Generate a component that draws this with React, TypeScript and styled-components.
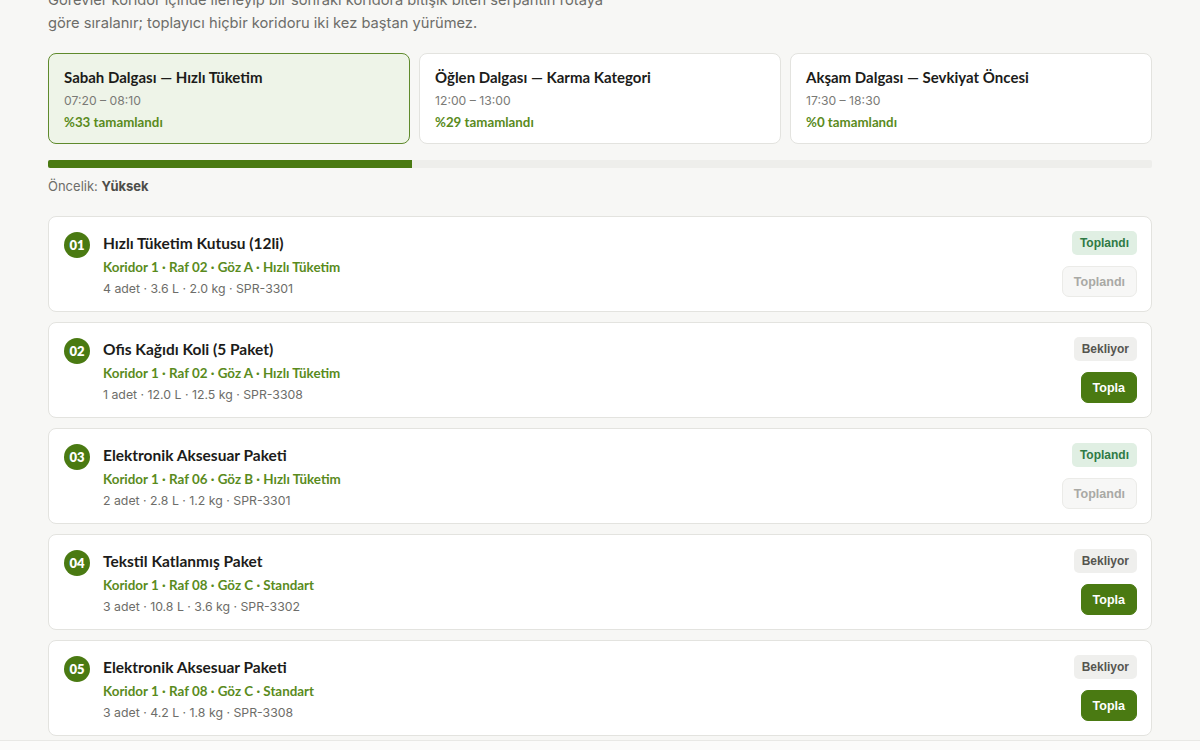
import React from 'react';
import styled, { createGlobalStyle } from 'styled-components';

const GlobalStyle = createGlobalStyle`
  html, body {
    margin: 0;
    padding: 0;
    background: #f7f7f5;
    font-family: Inter, "Noto Sans", sans-serif;
    color: #1f1f1f;
  }
  * { box-sizing: border-box; }
`;

type Wave = { title: string; time: string; pct: number; active?: boolean };
type Task = {
  no: string;
  name: string;
  loc: string;
  meta: string;
  done: boolean;
};

const waves: Wave[] = [
  { title: 'Sabah Dalgası — Hızlı Tüketim', time: '07:20 – 08:10', pct: 33, active: true },
  { title: 'Öğlen Dalgası — Karma Kategori', time: '12:00 – 13:00', pct: 29 },
  { title: 'Akşam Dalgası — Sevkiyat Öncesi', time: '17:30 – 18:30', pct: 0 },
];

const tasks: Task[] = [
  { no: '01', name: 'Hızlı Tüketim Kutusu (12li)', loc: 'Koridor 1 · Raf 02 · Göz A · Hızlı Tüketim', meta: '4 adet · 3.6 L · 2.0 kg · SPR-3301', done: true },
  { no: '02', name: 'Ofis Kağıdı Koli (5 Paket)', loc: 'Koridor 1 · Raf 02 · Göz A · Hızlı Tüketim', meta: '1 adet · 12.0 L · 12.5 kg · SPR-3308', done: false },
  { no: '03', name: 'Elektronik Aksesuar Paketi', loc: 'Koridor 1 · Raf 06 · Göz B · Hızlı Tüketim', meta: '2 adet · 2.8 L · 1.2 kg · SPR-3301', done: true },
  { no: '04', name: 'Tekstil Katlanmış Paket', loc: 'Koridor 1 · Raf 08 · Göz C · Standart', meta: '3 adet · 10.8 L · 3.6 kg · SPR-3302', done: false },
  { no: '05', name: 'Elektronik Aksesuar Paketi', loc: 'Koridor 1 · Raf 08 · Göz C · Standart', meta: '3 adet · 4.2 L · 1.8 kg · SPR-3308', done: false },
];

const Page = styled.main`
  width: 1104px;
  margin: 0 auto;
  padding-bottom: 40px;
`;

// the page is shown scrolled a little, so the first line sits partly above the top edge
const Intro = styled.p`
  margin: -11px 0 18px;
  max-width: 580px;
  font-size: 14.7px;
  line-height: 23px;
  color: #6d6d69;
`;

const WaveRow = styled.div`
  display: grid;
  grid-template-columns: repeat(3, 1fr);
  gap: 9px;
`;

const WaveCard = styled.div<{ $active?: boolean }>`
  height: 91px;
  padding: 13px 15px;
  border-radius: 8px;
  border: 1px solid ${(p) => (p.$active ? '#5f8a2c' : '#e3e3df')};
  background: ${(p) => (p.$active ? '#eef4e8' : '#ffffff')};
  display: flex;
  flex-direction: column;
`;

const WaveTitle = styled.div`
  font-family: Lato, "Noto Sans", sans-serif;
  font-weight: 700;
  font-size: 15px;
  color: #1c1c1a;
  line-height: 20px;
`;

const WaveTime = styled.div`
  margin-top: 5px;
  font-size: 12.2px;
  color: #7a7a76;
  line-height: 18px;
`;

const WavePct = styled.div`
  margin-top: 3px;
  font-family: Lato, "Noto Sans", sans-serif;
  font-weight: 700;
  font-size: 13.3px;
  color: #5a8b1d;
  line-height: 18px;
`;

const Track = styled.div`
  margin-top: 16px;
  height: 8px;
  background: #eeeeeb;
  border-radius: 2px;
  overflow: hidden;
`;

const Fill = styled.div`
  height: 100%;
  background: #4a7a12;
`;

const Priority = styled.div`
  margin-top: 10px;
  font-size: 13px;
  color: #6d6d69;
  b {
    color: #4d4d49;
    font-weight: 700;
  }
`;

const TaskList = styled.div`
  margin-top: 22px;
  display: flex;
  flex-direction: column;
  gap: 10px;
`;

const TaskCard = styled.div`
  height: 96px;
  background: #ffffff;
  border: 1px solid #e3e3df;
  border-radius: 8px;
  padding: 13px 14px 0 15px;
  display: flex;
  gap: 13px;
`;

const Num = styled.div`
  flex: none;
  width: 26px;
  height: 26px;
  margin-top: 2px;
  border-radius: 50%;
  background: #4a7a12;
  color: #fff;
  font-family: Lato, "Noto Sans", sans-serif;
  font-weight: 800;
  font-size: 13px;
  display: flex;
  align-items: center;
  justify-content: center;
`;

const Info = styled.div`
  flex: 1;
  display: flex;
  flex-direction: column;
`;

const TaskName = styled.div`
  font-family: Lato, "Noto Sans", sans-serif;
  font-weight: 700;
  font-size: 15.5px;
  line-height: 26px;
  color: #1c1c1a;
`;

const Loc = styled.div`
  margin-top: 1px;
  font-family: Lato, "Noto Sans", sans-serif;
  font-weight: 700;
  font-size: 13.4px;
  line-height: 20px;
  color: #5a8b1d;
`;

const Meta = styled.div`
  margin-top: 2px;
  font-size: 12.3px;
  line-height: 20px;
  color: #6d6d69;
`;

const Side = styled.div`
  display: flex;
  flex-direction: column;
  align-items: flex-end;
  gap: 11px;
  padding-top: 1px;
`;

const Badge = styled.span<{ $done: boolean }>`
  height: 24px;
  padding: 0 8px;
  border-radius: 5px;
  display: inline-flex;
  align-items: center;
  font-family: "Liberation Sans", Arial, sans-serif;
  font-weight: 700;
  font-size: 12px;
  background: ${(p) => (p.$done ? '#e0efe3' : '#efefed')};
  color: ${(p) => (p.$done ? '#2f7a45' : '#55554f')};
`;

const Button = styled.button<{ $disabled?: boolean }>`
  height: 31px;
  padding: 0 11px;
  border-radius: 7px;
  font-family: "Liberation Sans", Arial, sans-serif;
  font-weight: 700;
  font-size: 12.5px;
  cursor: pointer;
  border: 1px solid ${(p) => (p.$disabled ? '#ebebe8' : '#4a7a12')};
  background: ${(p) => (p.$disabled ? '#f7f7f6' : '#4a7a12')};
  color: ${(p) => (p.$disabled ? '#a9a9a5' : '#ffffff')};
`;

const Footer = styled.div`
  position: fixed;
  left: 0;
  right: 0;
  bottom: 0;
  height: 10px;
  background: #fbfbfa;
  border-top: 1px solid #e8e8e5;
`;

export default function App() {
  const active = waves[0];
  return (
    <>
      <GlobalStyle />
      <Page>
        <Intro>
          Görevler koridor içinde ilerleyip bir sonraki koridora bitişik biten serpantin rotaya
          göre sıralanır; toplayıcı hiçbir koridoru iki kez baştan yürümez.
        </Intro>
        <WaveRow>
          {waves.map((w) => (
            <WaveCard key={w.title} $active={w.active}>
              <WaveTitle>{w.title}</WaveTitle>
              <WaveTime>{w.time}</WaveTime>
              <WavePct>%{w.pct} tamamlandı</WavePct>
            </WaveCard>
          ))}
        </WaveRow>
        <Track>
          <Fill style={{ width: `${active.pct}%` }} />
        </Track>
        <Priority>
          Öncelik: <b>Yüksek</b>
        </Priority>
        <TaskList>
          {tasks.map((t) => (
            <TaskCard key={t.no}>
              <Num>{t.no}</Num>
              <Info>
                <TaskName>{t.name}</TaskName>
                <Loc>{t.loc}</Loc>
                <Meta>{t.meta}</Meta>
              </Info>
              <Side>
                <Badge $done={t.done}>{t.done ? 'Toplandı' : 'Bekliyor'}</Badge>
                {t.done ? <Button $disabled>Toplandı</Button> : <Button>Topla</Button>}
              </Side>
            </TaskCard>
          ))}
        </TaskList>
      </Page>
      <Footer />
    </>
  );
}
